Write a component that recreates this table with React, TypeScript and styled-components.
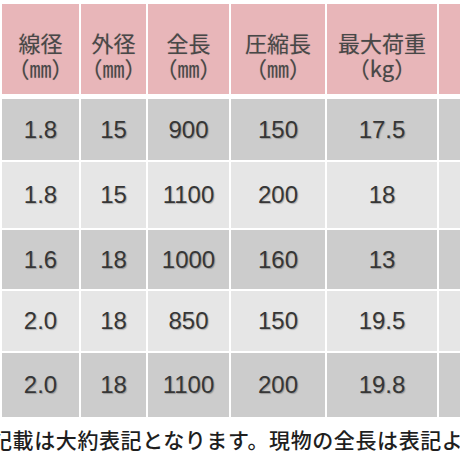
import React from "react";
import styled, { createGlobalStyle } from "styled-components";

const GlobalStyle = createGlobalStyle`
  html, body {
    margin: 0;
    padding: 0;
    background: #ffffff;
  }
  body {
    width: 460px;
    height: 460px;
    overflow: hidden;
  }
`;

const COLS = "77px 65px 81px 94px 110px 60px";

const Page = styled.div`
  width: 460px;
  height: 460px;
  overflow: hidden;
  padding: 4px 0 0 2px;
  box-sizing: border-box;
`;

const Table = styled.div`
  display: flex;
  flex-direction: column;
  gap: 2px;
  width: max-content;
`;

const HeadRow = styled.div`
  display: grid;
  grid-template-columns: ${COLS};
  column-gap: 2px;
  height: 90px;
  margin-bottom: 3px;
`;

const HeadCell = styled.div`
  background: #e8b6b9;
  display: flex;
  flex-direction: column;
  align-items: center;
  padding-top: 26px;
  box-sizing: border-box;
  font-family: "Noto Sans CJK JP", "Noto Sans", sans-serif;
  font-size: 22px;
  color: #484848;
  text-shadow: 0 0 1px rgba(0, 0, 0, 0.25);
  white-space: nowrap;
`;

const HeadLine = styled.div`
  display: block;
  height: 25px;
  line-height: 25px;
`;

const BodyRow = styled.div<{ $h: number; $dark: boolean }>`
  display: grid;
  grid-template-columns: ${COLS};
  column-gap: 2px;
  height: ${(p) => p.$h}px;
  & > div {
    background: ${(p) => (p.$dark ? "#cccccc" : "#e6e6e6")};
  }
`;

const Cell = styled.div`
  display: flex;
  align-items: center;
  justify-content: center;
  font-family: "Liberation Sans", Arial, sans-serif;
  font-size: 24px;
  color: #363636;
  text-shadow: 1px 1px 1px rgba(0, 0, 0, 0.25);
`;

const Note = styled.div`
  margin: 10px 0 0 -11px;
  height: 24px;
  font-family: "Noto Sans CJK JP", "Noto Sans", sans-serif;
  font-size: 21px;
  letter-spacing: 0.6px;
  line-height: 24px;
  font-weight: 500;
  color: #1e1e1e;
  white-space: nowrap;
`;

const headers: [string, string][] = [
  ["線径", "（㎜）"],
  ["外径", "（㎜）"],
  ["全長", "（㎜）"],
  ["圧縮長", "（㎜）"],
  ["最大荷重", "（kg）"],
  ["", ""],
];

const rows: { h: number; v: string[] }[] = [
  { h: 61, v: ["1.8", "15", "900", "150", "17.5", ""] },
  { h: 66, v: ["1.8", "15", "1100", "200", "18", ""] },
  { h: 59, v: ["1.6", "18", "1000", "160", "13", ""] },
  { h: 60, v: ["2.0", "18", "850", "150", "19.5", ""] },
  { h: 64, v: ["2.0", "18", "1100", "200", "19.8", ""] },
];

export default function App() {
  return (
    <>
      <GlobalStyle />
      <Page>
        <Table>
          <HeadRow>
            {headers.map(([a, b], i) => (
              <HeadCell key={i}>
                <HeadLine>{a}</HeadLine>
                <HeadLine>{b}</HeadLine>
              </HeadCell>
            ))}
          </HeadRow>
          {rows.map((r, i) => (
            <BodyRow key={i} $h={r.h} $dark={i % 2 === 0}>
              {r.v.map((t, j) => (
                <Cell key={j}>{t}</Cell>
              ))}
            </BodyRow>
          ))}
        </Table>
        <Note>記載は大約表記となります。現物の全長は表記より</Note>
      </Page>
    </>
  );
}
